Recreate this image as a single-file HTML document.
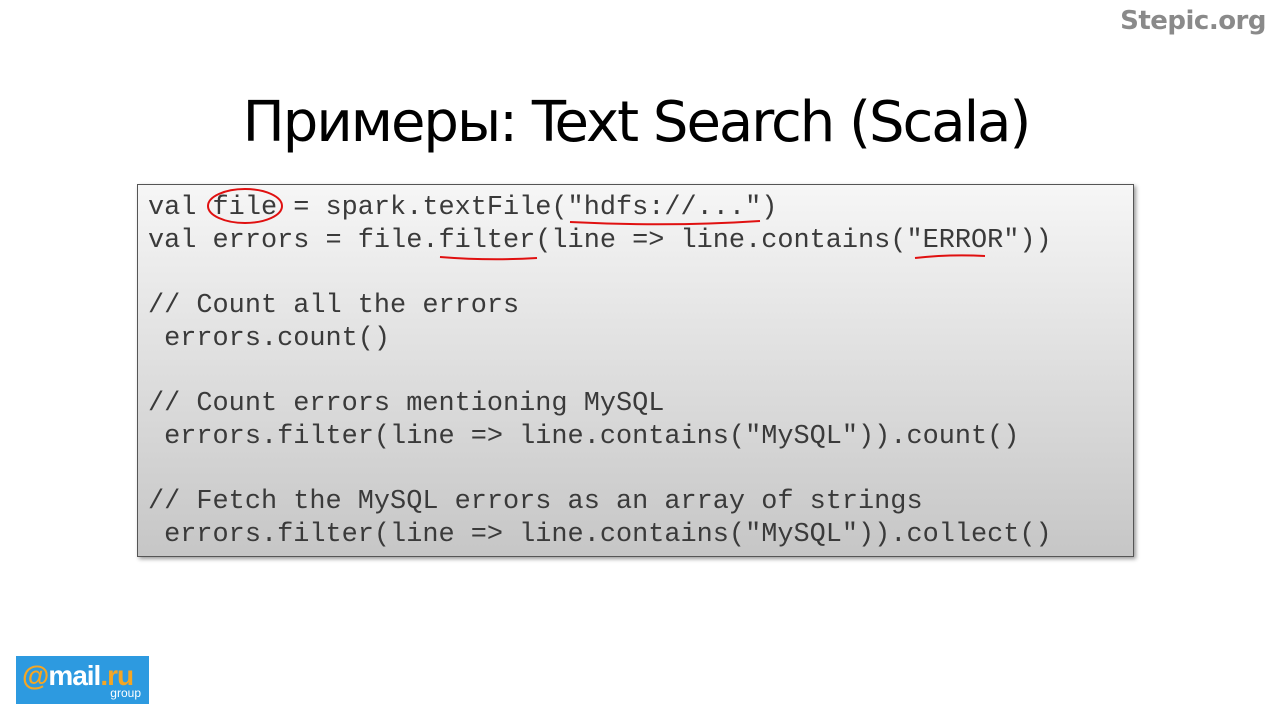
<!DOCTYPE html>
<html><head><meta charset="utf-8"><style>
body{margin:0;width:1280px;height:720px;background:#fff;position:relative;overflow:hidden;font-family:"Liberation Sans",sans-serif}
.st{position:absolute;right:14px;top:6px;font-size:26px;font-weight:bold;color:#8a8a8a;font-family:"DejaVu Sans",sans-serif;letter-spacing:-0.5px}
h1{position:absolute;left:0;width:1272px;top:90px;margin:0;text-align:center;font-weight:normal;font-size:56px;color:#000;font-family:"DejaVu Sans","Liberation Sans",sans-serif;letter-spacing:-2px}
.box{position:absolute;left:137px;top:184px;width:995px;height:371px;border:1px solid #555;background:linear-gradient(#f6f6f6,#c6c6c6);box-shadow:2px 2px 4px rgba(0,0,0,.4)}
pre{position:absolute;left:148px;top:192px;margin:0;font-family:"Liberation Mono",monospace;font-size:26.9px;line-height:32.7px;color:#3a3a3a}
.logo{position:absolute;left:16px;top:656px;width:133px;height:48px;background:#2d9ae0;color:#fff}
</style></head><body>
<div class="st">Stepic.org</div>
<h1>Примеры: Text Search (Scala)</h1>
<div class="box"></div>
<pre>val file = spark.textFile("hdfs://...")
val errors = file.filter(line =&gt; line.contains("ERROR"))

// Count all the errors
 errors.count()

// Count errors mentioning MySQL
 errors.filter(line =&gt; line.contains("MySQL")).count()

// Fetch the MySQL errors as an array of strings
 errors.filter(line =&gt; line.contains("MySQL")).collect()</pre>
<svg style="position:absolute;left:0;top:0" width="1280" height="720" fill="none" stroke="#e01010" stroke-width="2">
<ellipse cx="245" cy="206" rx="37" ry="17"/>
<path d="M440 257 Q490 261 537 258"/>
<path d="M570 222 Q670 227 760 221"/>
<path d="M915 258 Q950 254 985 256"/>
</svg>
<div class="logo">
<div style="position:absolute;left:6px;top:4px;font-size:28px;font-weight:bold;letter-spacing:-1px"><span style="color:#f5a623">@</span>mail<span style="color:#f5a623">.ru</span></div>
<div style="position:absolute;right:8px;top:30px;font-size:12px">group</div>
</div>
</body></html>
